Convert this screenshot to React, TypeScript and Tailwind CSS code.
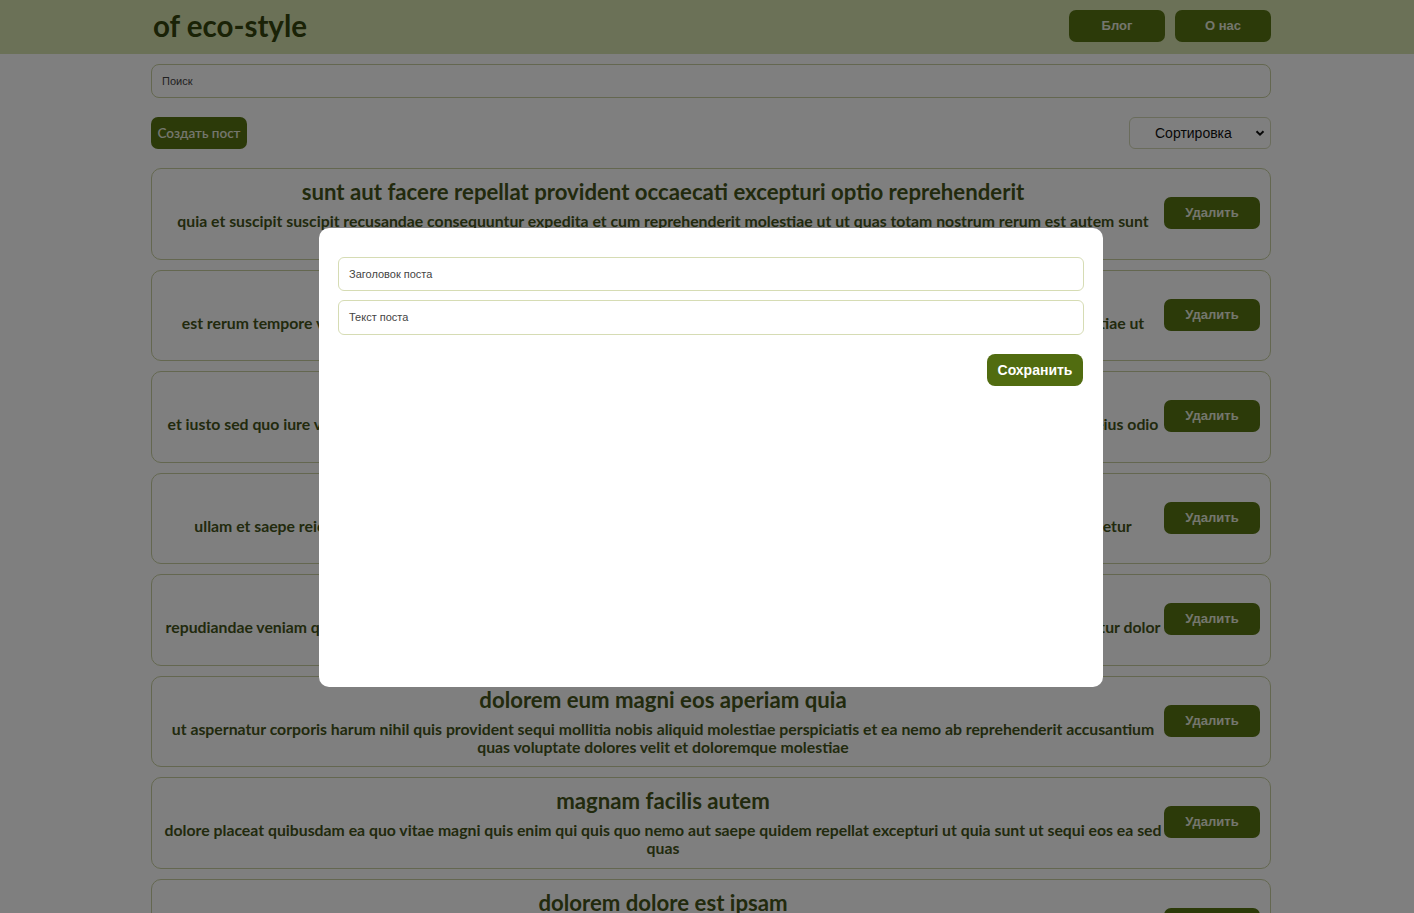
import React from "react";

const posts = [
  {
    title: "sunt aut facere repellat provident occaecati excepturi optio reprehenderit",
    body: "quia et suscipit suscipit recusandae consequuntur expedita et cum reprehenderit molestiae ut ut quas totam nostrum rerum est autem sunt rem eveniet architecto",
  },
  {
    title: "qui est esse",
    body: "est rerum tempore vitae sequi sint nihil reprehenderit dolor beatae ea dolores neque fugiat blanditiis voluptate porro vel nihil molestiae ut reiciendis qui aperiam non debitis possimus qui neque nisi nulla",
  },
  {
    title: "ea molestias quasi exercitationem repellat qui ipsa sit aut",
    body: "et iusto sed quo iure voluptatem occaecati omnis eligendi aut ad voluptatem doloribus vel accusantium quis pariatur molestiae porro eius odio et labore et velit aut",
  },
  {
    title: "eum et est occaecati",
    body: "ullam et saepe reiciendis voluptatem adipisci sit amet autem assumenda provident rerum culpa quis hic commodi nesciunt rem tenetur doloremque ipsam iure quis sunt voluptatem rerum illo velit",
  },
  {
    title: "nesciunt quas odio",
    body: "repudiandae veniam quaerat sunt sed alias aut fugiat sit autem sed est voluptatem omnis possimus esse voluptatibus quis est aut tenetur dolor neque",
  },
  {
    title: "dolorem eum magni eos aperiam quia",
    body: "ut aspernatur corporis harum nihil quis provident sequi mollitia nobis aliquid molestiae perspiciatis et ea nemo ab reprehenderit accusantium quas voluptate dolores velit et doloremque molestiae",
  },
  {
    title: "magnam facilis autem",
    body: "dolore placeat quibusdam ea quo vitae magni quis enim qui quis quo nemo aut saepe quidem repellat excepturi ut quia sunt ut sequi eos ea sed quas",
  },
  {
    title: "dolorem dolore est ipsam",
    body: "dignissimos aperiam dolorem qui eum facilis quibusdam animi sint suscipit qui sint possimus cum quaerat magni maiores excepturi ipsam ut commodi dolor voluptatum modi aut vitae",
  },
  {
    title: "nesciunt iure omnis dolorem tempora et accusantium",
    body: "consectetur animi nesciunt iure dolore enim quia ad veniam autem ut quam aut nobis et est aut quod aut provident voluptas autem voluptas",
  },
  {
    title: "optio molestias id quia eum",
    body: "quo et expedita modi cum officia vel magni doloribus qui repudiandae vero nisi sit quos veniam quod sed accusamus veritatis error",
  },
];

const humanist = { fontFamily: "Lato, 'Open Sans', sans-serif" };
const arial = { fontFamily: "'Liberation Sans', Arial, sans-serif" };

export default function App() {
  return (
    <div className="min-h-screen bg-white">
      <header className="h-[54px] bg-[#d6e2ae] pl-[8px]">
        <div className="mx-auto flex h-full w-[1120px] items-center justify-between">
          <div
            className="pb-[3px] pl-[2px] text-[29.5px] font-bold leading-none text-[#34440c]"
            style={humanist}
          >
            of eco-style
          </div>
          <div className="flex gap-[10px] pb-[2px]">
            <button
              className="h-[32px] w-[96px] rounded-[7px] bg-[#587413] text-[13px] font-bold text-[#e8ecdc]"
              style={arial}
            >
              Блог
            </button>
            <button
              className="h-[32px] w-[96px] rounded-[7px] bg-[#587413] text-[13px] font-bold text-[#e8ecdc]"
              style={arial}
            >
              О нас
            </button>
          </div>
        </div>
      </header>

      <main className="pl-[8px]">
        <div className="mx-auto w-[1120px] pt-[10px]">
          <div className="flex h-[34px] items-center rounded-[8px] border border-[#c8cfa0] px-[10px]">
            <span className="text-[11px] text-[#444]" style={arial}>
              Поиск
            </span>
          </div>

          <div className="mt-[19px] flex items-center justify-between">
            <button
              className="h-[32px] w-[96px] rounded-[7px] bg-[#587413] text-[13.5px] font-semibold text-[#e8ecdc]"
              style={humanist}
            >
              Создать пост
            </button>
            <div
              className="flex h-[32px] w-[142px] items-center justify-between rounded-[6px] border border-[#d4d9b8] bg-white pl-[25px] pr-[4px] text-[14px] text-[#111]"
              style={arial}
            >
              <span>Сортировка</span>
              <svg width="12" height="12" viewBox="0 0 12 12">
                <path d="M2.5 4.2 L6 7.7 L9.5 4.2" stroke="#111" strokeWidth="2" fill="none" />
              </svg>
            </div>
          </div>

          <div className="mt-[19px] flex flex-col gap-[10px]">
            {posts.map((p, i) => (
              <div
                key={i}
                className="flex items-center rounded-[10px] border border-[#c8cfa0] pb-[10.5px] pl-[11px] pr-[10px] pt-[9px]"
              >
                <div className="w-[1000px] text-center text-[#44541a]" style={humanist}>
                  <div className="text-[22.2px] font-bold leading-[28px]">{p.title}</div>
                  <div className="mt-[6px] text-[15.8px] font-bold leading-[18px]">{p.body}</div>
                </div>
                <button
                  className="ml-auto h-[32px] w-[96px] shrink-0 rounded-[7px] bg-[#587413] text-[13px] font-bold text-[#e8ecdc]"
                  style={arial}
                >
                  Удалить
                </button>
              </div>
            ))}
          </div>
        </div>
      </main>

      <div className="fixed inset-0 flex items-center justify-center bg-black/50 pl-[8px]">
        <div className="mt-[2px] h-[459px] w-[784px] rounded-[10px] bg-white px-[19px] pt-[29px]">
          <div className="flex h-[34px] items-center rounded-[6px] border border-[#d6dcb4] px-[10px]">
            <span className="text-[11px] text-[#444]" style={arial}>
              Заголовок поста
            </span>
          </div>
          <div className="mt-[9px] flex h-[35px] items-center rounded-[6px] border border-[#d6dcb4] px-[10px]">
            <span className="text-[11px] text-[#444]" style={arial}>
              Текст поста
            </span>
          </div>
          <div className="mt-[19px] flex justify-end pr-[1px]">
            <button
              className="h-[32px] w-[96px] rounded-[8px] bg-[#516c10] text-[14px] font-bold text-white"
              style={arial}
            >
              Сохранить
            </button>
          </div>
        </div>
      </div>
    </div>
  );
}
